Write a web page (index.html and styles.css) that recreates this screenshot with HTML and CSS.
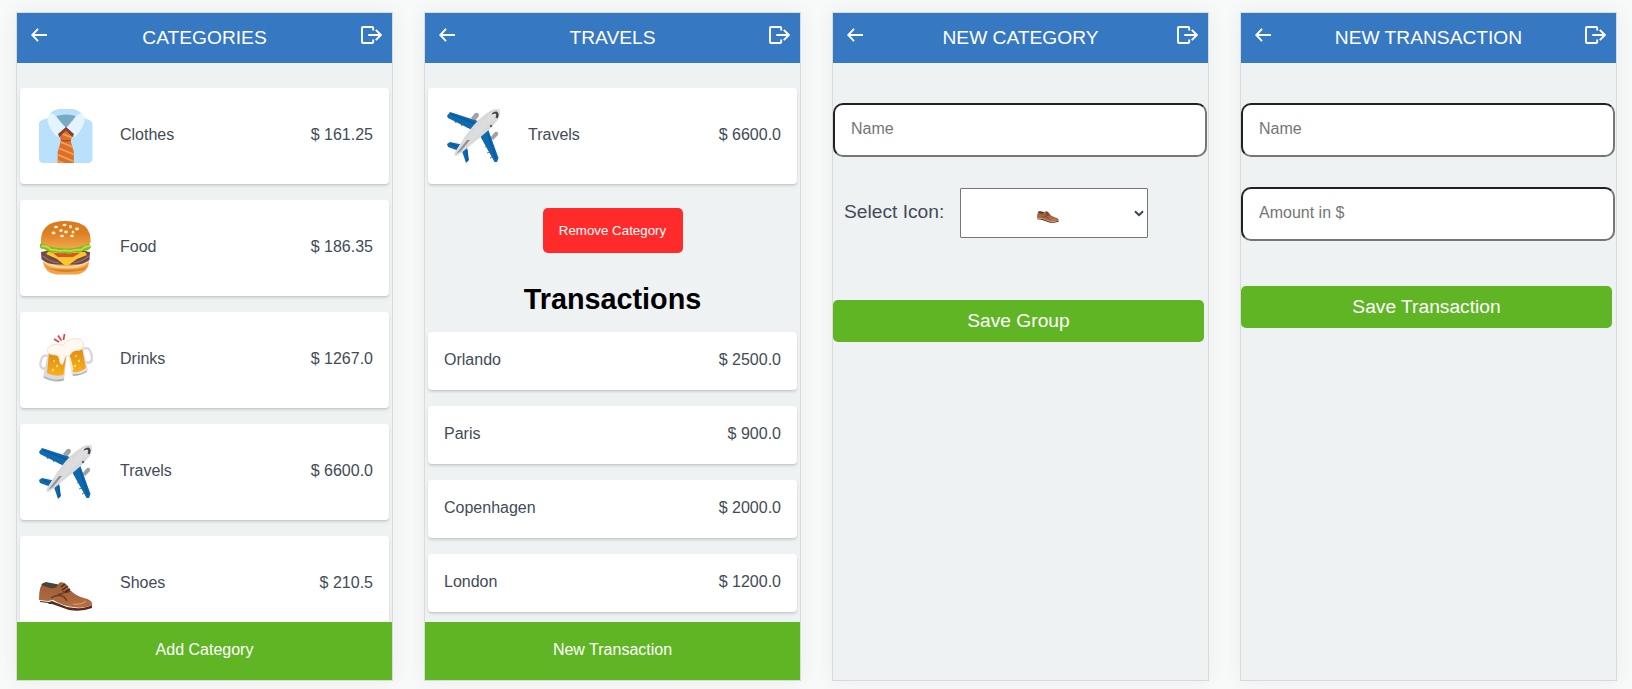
FILE: index.html
```
<!DOCTYPE html>
<html lang="en">
<head>
<meta charset="utf-8">
<title>Budget</title>
<link rel="stylesheet" href="styles.css">
</head>
<body>
<svg class="sprite" aria-hidden="true">
  <defs>
    <linearGradient id="bun" x1="0" y1="0" x2="0" y2="1"><stop offset="0" stop-color="#d97a1c"/><stop offset=".45" stop-color="#dc8024"/><stop offset="1" stop-color="#f3a84a"/></linearGradient>
    <linearGradient id="beer" x1="0" y1="0" x2="0" y2="1"><stop offset="0" stop-color="#dd8a12"/><stop offset="1" stop-color="#fbb01b"/></linearGradient>
    <linearGradient id="body" x1="0" y1="0" x2="1" y2="1"><stop offset="0" stop-color="#c4c4c8"/><stop offset=".5" stop-color="#dedede"/><stop offset="1" stop-color="#b8b8bb"/></linearGradient>
    <linearGradient id="leather" x1="0" y1="0" x2="0" y2="1"><stop offset="0" stop-color="#9c5c35"/><stop offset="1" stop-color="#b27043"/></linearGradient>
    <clipPath id="tieclip"><path d="M27 18 34 26 31.500 31.500 34.800 43V54H18.700V43L22 31.500 20 26Z"/></clipPath>
  </defs>
  <symbol id="back" viewBox="0 0 16 14"><path d="M16 7H1.400M7 .8 1.200 7 7 13.200" fill="none" stroke="#fff" stroke-width="1.900"/></symbol>
  <symbol id="logout" viewBox="0 0 21 18"><path d="M12.200 4.500V2a1 1 0 0 0-1-1H2a1 1 0 0 0-1 1v14a1 1 0 0 0 1 1h9.200a1 1 0 0 0 1-1v-2.500M7.300 9h12M14.800 3.900 19.800 9l-5 5.100" fill="none" stroke="#fff" stroke-width="1.900"/></symbol>
  <symbol id="shirt" viewBox="0 0 54 54">
    <path d="M0 15Q0 12 3 11L9 9Q11 1 20 0H34Q42 1 45 9L50 11Q53.500 12 53.500 16V50Q53 53.500 50 54H4Q0 53.500 0 50Z" fill="#bae1fb"/>
    <path d="M17 7Q27 4 37 7L27 19Z" fill="#78abc2"/>
    <path d="M12 4Q7 10 9 14 12 22 18 28L26.500 18.500Q20 13 17 7 14 5 12 4ZM42 4Q47 10 45 14 42 22 36 28L27.500 18.500Q34 13 37 7 40 5 42 4Z" fill="#e4f4fd"/>
    <g clip-path="url(#tieclip)"><path d="M18 18H36V54H18Z" fill="#db6d35"/><path d="M17 22 36 30M17 31 36 39M17 38 36 46M17 45 36 53M17 51 28 56" stroke="#f6a33a" stroke-width="1.800"/></g>
    <path d="M19 25 27 18 35 25 33.500 28 27 21.500 20.500 28Z" fill="#864230"/><path d="M22 31Q27 33 32 31" fill="none" stroke="#a54a2b" stroke-width="1.300"/>
  </symbol>
  <symbol id="burger" viewBox="0 0 54 54">
    <path d="M4 41Q6 52 17 53.500H37Q49 52 50 41Z" fill="#f3a343"/><path d="M5 44Q9 48 19 48.500H36Q46 48 49 44 48 47 44 49 36 51 27 51 12 51 5 44Z" fill="#d97f24"/>
    <path d="M5 39Q15 45 27 45 40 45 50 39V41Q42 48 27 47.500 12 48 4 41Z" fill="#f9d59c"/>
    <path d="M2 31Q27 24 51 31L50.500 39Q43 44 36 43.500H18Q7 43 2.500 38Z" fill="#6e4a48"/>
    <path d="M4 35Q11 41 20 42M50 35Q42 41 34 42" fill="none" stroke="#97736b" stroke-width="1.200"/>
    <path d="M9 31H46L48 34 38 38 29 44.500H26L18 38 7 33Z" fill="#ffc52f"/><path d="M14 32H41L34 36H19Z" fill="#e84c27"/>
    <path d="M2 22Q-1 26 3 28 5 27 8 30 12 33 17 31 21 34 26 32 31 35 35 31 40 33 44 30 50 30 52 26L50 22Z" fill="#7dbb20"/>
    <path d="M2.500 25Q9 25 12 29 17 28 20 30 25 29 32 30 37 28 42 29 46 25 51 25" fill="none" stroke="#b8de43" stroke-width="2"/>
    <path d="M2 18Q3 5 15 1.500 27-1.500 40 2 51 6 51.500 18V22Q40 27.500 27 27.500 10 27 2 22Z" fill="url(#bun)"/>
    <g fill="#fff0d2"><ellipse cx="17" cy="6" rx="2" ry="1.300"/><ellipse cx="25.500" cy="4" rx="2" ry="1.300"/><ellipse cx="31.500" cy="5.700" rx="1.500" ry="1.700"/><ellipse cx="38" cy="8" rx="2" ry="1.400"/><ellipse cx="22" cy="9.500" rx="1.700" ry="1.500"/><ellipse cx="14.500" cy="12" rx="2" ry="1.400"/><ellipse cx="27" cy="11" rx="1.800" ry="1.400"/><ellipse cx="34" cy="11" rx="1.400" ry="1.600"/><ellipse cx="23" cy="15" rx="1.900" ry="1.300"/><ellipse cx="33" cy="15" rx="1.900" ry="1.300"/></g>
  </symbol>
  <symbol id="beers" viewBox="0 0 54 54">
    <path d="M15 6 20 9M19 2.500 22.500 7.500M25.500 1 24.500 7" stroke="#e53d3d" stroke-width="1.600"/>
    <path d="M9 23Q3 21 2 28 0 35 5 36L8 34M44 16Q50 13 52 20 55 28 50 30L47 29" fill="none" stroke="#d5d7dc" stroke-width="2.400"/>
    <path d="M29 18 44 15 49 37Q44 43 33 43Z" fill="#e2e3e5"/><path d="M30 18 43 15 47 35Q41 40 34 39Z" fill="url(#beer)"/>
    <path d="M9 20 28 22 25 47Q21 50 14 48.500 6 47 4 44Z" fill="#d9dbdf"/><path d="M10 20 27 23 24.500 42Q16 44 8 40Z" fill="url(#beer)"/>
    <path d="M5 44Q15 49 25 46.500M34 42Q43 42 48 38" fill="none" stroke="#a7abb1" stroke-width="1.300"/>
    <path d="M9 20Q7 14 13 12 22 10 25 13 24 9 30 7 41 3 44 9 46 15 41 17 35 17 33 19 31 23 28 23 26 23 25 27 23 35 21 29 20 22 17 22 12 22 9 20Z" fill="#fff9f2" stroke="#fae1cb" stroke-width="1"/>
    <g fill="#ffe27a"><circle cx="15" cy="28" r="1"/><circle cx="18" cy="33" r="1.200"/><circle cx="14" cy="37" r="1.200"/><circle cx="37" cy="23" r="1"/><circle cx="40" cy="28" r="1.200"/><circle cx="36" cy="33" r="1.200"/></g>
    <path d="M31 25 34 37" stroke="#fff3a0" stroke-width="1.300"/>
  </symbol>
  <symbol id="plane" viewBox="0 0 54 54">
    <g fill="#a0a2a5"><path d="M24 9 28 4Q32 3 32 7L28 12ZM43 29 48 23Q52 22 51 26L46 31Z"/></g>
    <path d="M8 12 9 14M14 15 15 17M20 17 21 19M41 37 38 38M43 43 40 44M45 48 43 49" stroke="#858b91" stroke-width="1.300"/>
    <path d="M0 7 3 3 34 13 27 22 1 9ZM32 25 41 20 51.500 49 50 53 47.500 53ZM0 35 3 33 17 36 12 42 1 38ZM15 42 20 38 22 51 19 54Z" fill="#0e69af"/>
    <path d="M4 5 29 15M41 25 49 50M4 35 13 39M20 41 20 52" stroke="#0a5799" stroke-width="1.200"/>
    <path d="M52 0Q48-1 43 2 31 9 19 26L8 43Q6 47 9 47 11 47 25 35 43 21 50 12 55 4 52 0Z" fill="url(#body)"/>
    <path d="M23 31 20 31 9 45 14 42Z" fill="#939498"/><path d="M44.500 5.500Q46 2 50 2.500 53 5 50.500 9.500L48.500 8.500Q50 5 48 4.500Z" fill="#3d4851"/><circle cx="44" cy="17" r="1.200" fill="#59646c"/>
  </symbol>
  <symbol id="shoe" viewBox="0 0 54 29">
    <path d="M1 19 10 20 13 19 28 25Q44 28 53 23V26Q43 30 30 28L13 22 10 22 9 21 1 20Z" fill="#542b22"/>
    <path d="M2 4Q0 8 0 18L9 19 14 18Q24 24 34 25 45 27 53 23 54 18 45 16 37 14 31 8L27 2Q23-1 20 1L18 5Q10 6 5 1Z" fill="url(#leather)"/>
    <path d="M2 3Q3 1 7 0L17 2Q20 2 19 4 15 8 8 5Z" fill="#4b4239"/>
    <path d="M12 16Q19 11 25 15 27 17 28 19M26 10Q22 13 19 12M31 9Q26 12 24 9" fill="none" stroke="#6c3823" stroke-width="1.300"/>
    <path d="M22 5 26 2M23 8 29 4M26 10 31 7" stroke="#442a25" stroke-width="1.500"/><path d="M34 22Q43 23 47 19" fill="none" stroke="#e08a4e" stroke-width="1.500"/>
  </symbol>
</svg>

<main class="screens">
  <section class="phone">
    <header class="bar"><svg class="back"><use href="#back"/></svg><span class="title">CATEGORIES</span><svg class="logout"><use href="#logout"/></svg></header>
    <div class="list">
      <article class="card"><svg class="emoji"><use href="#shirt"/></svg><span>Clothes</span><span class="amount">$ 161.25</span></article>
      <article class="card"><svg class="emoji"><use href="#burger"/></svg><span>Food</span><span class="amount">$ 186.35</span></article>
      <article class="card"><svg class="emoji"><use href="#beers"/></svg><span>Drinks</span><span class="amount">$ 1267.0</span></article>
      <article class="card"><svg class="emoji"><use href="#plane"/></svg><span>Travels</span><span class="amount">$ 6600.0</span></article>
      <article class="card"><svg class="emoji emoji-shoe"><use href="#shoe"/></svg><span>Shoes</span><span class="amount">$ 210.5</span></article>
    </div>
    <footer class="action">Add Category</footer>
  </section>

  <section class="phone">
    <header class="bar"><svg class="back"><use href="#back"/></svg><span class="title">TRAVELS</span><svg class="logout"><use href="#logout"/></svg></header>
    <div class="list">
      <article class="card"><svg class="emoji"><use href="#plane"/></svg><span>Travels</span><span class="amount">$ 6600.0</span></article>
      <button class="remove">Remove Category</button>
      <h1 class="heading">Transactions</h1>
      <article class="row"><span>Orlando</span><span>$ 2500.0</span></article>
      <article class="row"><span>Paris</span><span>$ 900.0</span></article>
      <article class="row"><span>Copenhagen</span><span>$ 2000.0</span></article>
      <article class="row"><span>London</span><span>$ 1200.0</span></article>
    </div>
    <footer class="action">New Transaction</footer>
  </section>

  <section class="phone">
    <header class="bar"><svg class="back"><use href="#back"/></svg><span class="title">NEW CATEGORY</span><svg class="logout"><use href="#logout"/></svg></header>
    <form class="form">
      <input class="field" placeholder="Name">
      <div class="picker">
        <span class="picker-label">Select Icon:</span>
        <div class="select"><svg class="select-shoe"><use href="#shoe"/></svg><svg class="chevron" viewBox="0 0 10 7"><path d="M1 1.200 5 5.200 9 1.200" fill="none" stroke="#3f4350" stroke-width="2"/></svg></div>
      </div>
      <button class="save save-group" type="button">Save Group</button>
    </form>
  </section>

  <section class="phone">
    <header class="bar"><svg class="back"><use href="#back"/></svg><span class="title">NEW TRANSACTION</span><svg class="logout"><use href="#logout"/></svg></header>
    <form class="form">
      <input class="field" placeholder="Name">
      <input class="field" placeholder="Amount in $">
      <button class="save save-transaction" type="button">Save Transaction</button>
    </form>
  </section>
</main>
</body>
</html>
```
FILE: styles.css
```
* { box-sizing: border-box; }
body {
  margin: 0;
  height: 689px;
  overflow: hidden;
  background: #f8faf9;
  color: #434b57;
  font: 16px/24px "Liberation Sans", Arial, sans-serif;
}
.sprite { position: absolute; width: 0; height: 0; }
.screens { display: flex; gap: 31px; padding: 12px 0 0 16px; }
.phone {
  display: flex;
  flex-direction: column;
  flex: none;
  width: 377px;
  height: 669px;
  border: 1px solid #d8dbdc;
  background: #eef2f3;
  box-shadow: 0 0 20px rgba(0, 0, 0, .06);
}
.bar {
  display: flex;
  flex: none;
  align-items: flex-start;
  justify-content: space-between;
  height: 50px;
  padding: 13px 10px 0 14px;
  background: #3778c2;
  color: #fff;
}
.title { flex: 1; padding-left: 1px; text-align: center; font-size: 19.2px; line-height: 24px; }
.back { width: 16px; height: 14px; margin-top: 2px; }
.logout { width: 21px; height: 18px; }
.list { flex: 1; min-height: 0; overflow: hidden; padding: 25px 3px 0; }
.card, .row {
  display: flex;
  align-items: center;
  border-radius: 4px;
  background: #fff;
  box-shadow: 0 2px 3px rgba(0, 0, 0, .12), 0 1px 1px rgba(0, 0, 0, .06);
}
.card { height: 96px; margin-bottom: 16px; padding: 0 16px 3px 19px; }
.emoji { width: 54px; height: 54px; margin: 2px 27px 0 0; flex: none; }
.emoji-shoe { height: 29px; margin-top: 27px; }
.amount { margin-left: auto; }
.remove {
  display: block;
  width: 140px;
  height: 45px;
  margin: 24px auto 0;
  padding: 0;
  border: 0;
  border-radius: 5px;
  background: #ff2b2b;
  color: #fff;
  font: 13.333px "Liberation Sans", Arial, sans-serif;
}
.heading { margin: 29px 0 15px; color: #000; text-align: center; font-size: 28.8px; line-height: 35px; }
.row { justify-content: space-between; height: 58px; margin-bottom: 16px; padding: 0 16px 2px; }
.action {
  flex: none;
  height: 58px;
  padding-bottom: 3px;
  background: #60b525;
  color: #fff;
  text-align: center;
  line-height: 55px;
}
.form { display: flex; flex-direction: column; padding-top: 40px; }
.field {
  width: 374px;
  height: 54px;
  margin: 0 0 30px;
  padding: 0 16px 2px;
  border: 2px inset #767676;
  border-radius: 10px;
  background: #fff;
  font: 16px "Liberation Sans", Arial, sans-serif;
}
.field::placeholder { color: #757575; }
.picker { display: flex; align-items: center; height: 50px; margin-top: 1px; }
.picker-label { width: 127px; padding: 0 0 3px 11px; font-size: 19.2px; }
.select {
  display: flex;
  align-items: center;
  width: 188px;
  height: 50px;
  padding: 0 3px 0 76px;
  border: 1px solid #767676;
  border-radius: 1px;
  background: #fff;
}
.select-shoe { width: 22px; height: 12px; margin-top: 7px; }
.chevron { width: 10px; height: 7px; margin-left: auto; }
.save {
  width: 371px;
  height: 42px;
  padding: 0;
  border: 0;
  border-radius: 5px;
  background: #60b525;
  color: #fff;
  font: 19.2px "Liberation Sans", Arial, sans-serif;
}
.save-group { margin-top: 62px; }
.save-transaction { margin-top: 15px; }
```
